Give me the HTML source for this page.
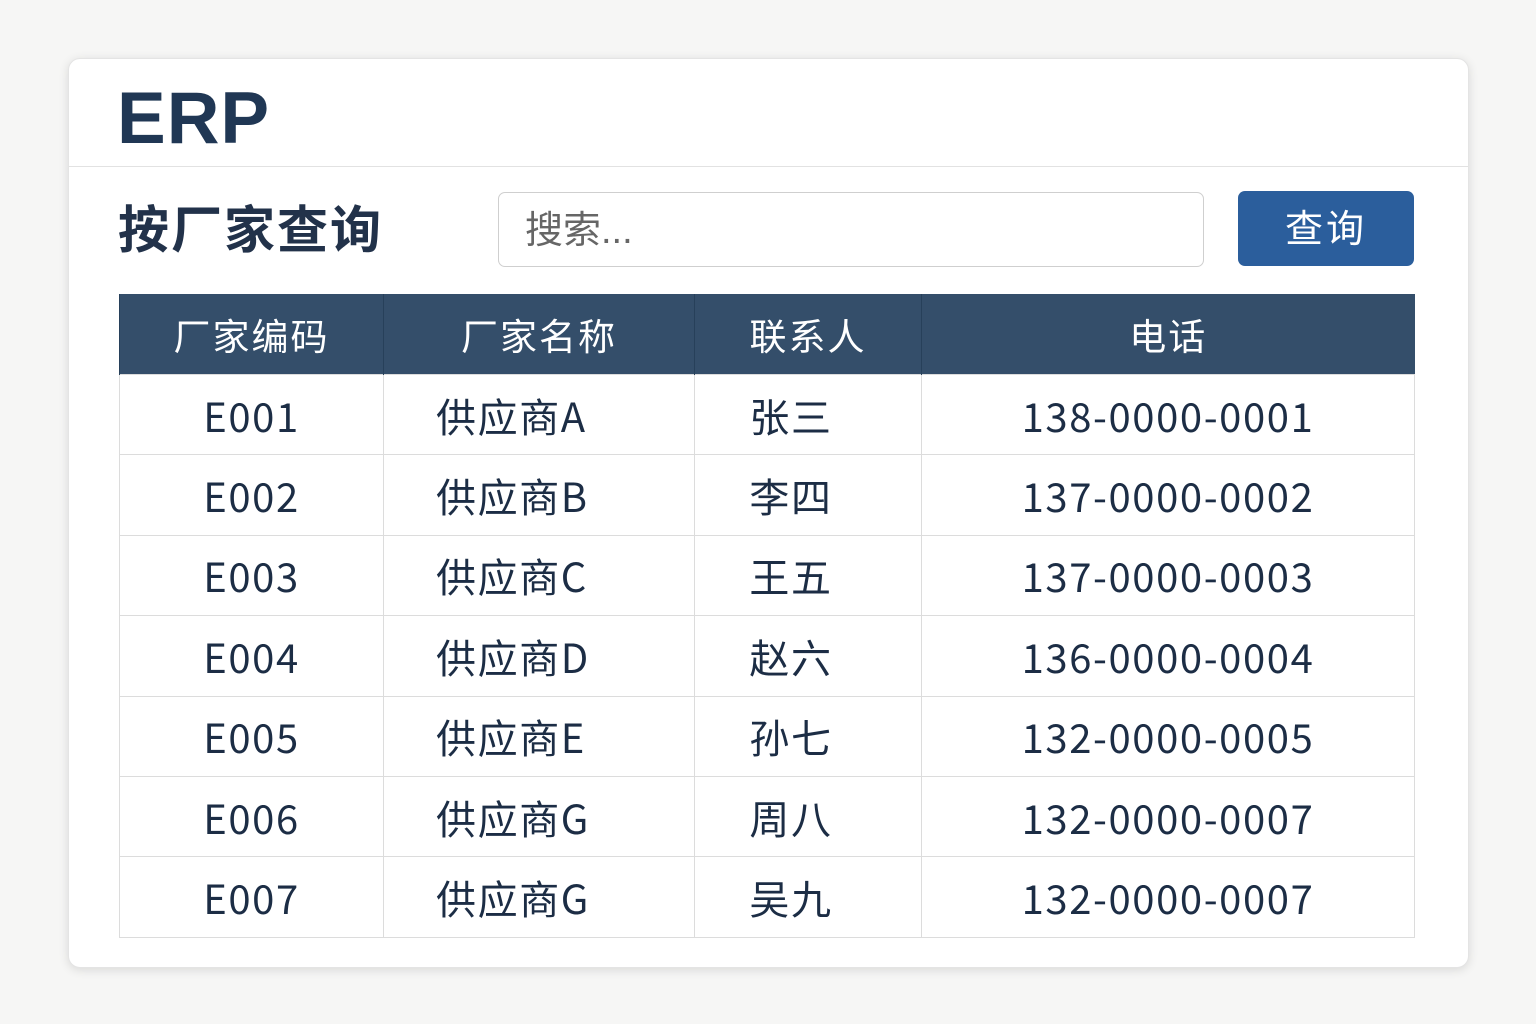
<!DOCTYPE html>
<html><head><meta charset="utf-8"><style>
body{margin:0;width:1536px;height:1024px;background:#f6f6f5;font-family:"Liberation Sans","Noto Sans CJK SC",sans-serif;color:#1c2d45;position:relative;overflow:hidden}
.card{position:absolute;left:68px;top:58px;width:1401px;height:910px;background:#fff;border-radius:12px;box-shadow:0 2px 10px rgba(0,0,0,.12);border:1px solid #e4e4e4;box-sizing:border-box}
.erp{position:absolute;left:48px;top:18px;font-size:73px;font-weight:bold;color:#203754;letter-spacing:1px}
.hr{position:absolute;left:0;right:0;top:107px;border-top:1.5px solid #e2e2e2}
.title{position:absolute;left:49px;top:130px;font-size:51px;font-weight:bold;color:#22324a;letter-spacing:2px}
.input{position:absolute;left:429px;top:133px;width:706px;height:75px;border:1.5px solid #cfcfcf;border-radius:7px;box-sizing:border-box;font-size:38px;color:#666;padding-left:26px;line-height:76px}
.btn{position:absolute;left:1169px;top:132px;width:176px;height:75px;background:#2b5e9c;border-radius:7px;color:#fff;font-size:38px;text-align:center;line-height:78px;letter-spacing:3px}
table{position:absolute;left:50px;top:235px;width:1296px;border-collapse:collapse;font-family:"Noto Sans CJK SC",sans-serif;font-size:40px;letter-spacing:1.6px}
th{background:#344e6a;color:#fff;font-weight:normal;height:80px;border-left:1px solid #27405a;font-size:37px;letter-spacing:2px;padding:0}
td{height:79.4px;border:1.5px solid #dcdcdc;text-align:center;padding:0;line-height:1}
td.l{text-align:left;padding-left:52px}
td.c{padding-right:34px}
</style></head><body>
<div class="card">
<div class="erp">ERP</div>
<div class="hr"></div>
<div class="title">按厂家查询</div>
<div class="input">搜索...</div>
<div class="btn">查询</div>
<table>
<tr><th style="width:263px">厂家编码</th><th style="width:310px">厂家名称</th><th style="width:226px">联系人</th><th>电话</th></tr>
<tr><td>E001</td><td class="l">供应商A</td><td class="c">张三</td><td>138-0000-0001</td></tr>
<tr><td>E002</td><td class="l">供应商B</td><td class="c">李四</td><td>137-0000-0002</td></tr>
<tr><td>E003</td><td class="l">供应商C</td><td class="c">王五</td><td>137-0000-0003</td></tr>
<tr><td>E004</td><td class="l">供应商D</td><td class="c">赵六</td><td>136-0000-0004</td></tr>
<tr><td>E005</td><td class="l">供应商E</td><td class="c">孙七</td><td>132-0000-0005</td></tr>
<tr><td>E006</td><td class="l">供应商G</td><td class="c">周八</td><td>132-0000-0007</td></tr>
<tr><td>E007</td><td class="l">供应商G</td><td class="c">吴九</td><td>132-0000-0007</td></tr>
</table>
</div>
</body></html>
